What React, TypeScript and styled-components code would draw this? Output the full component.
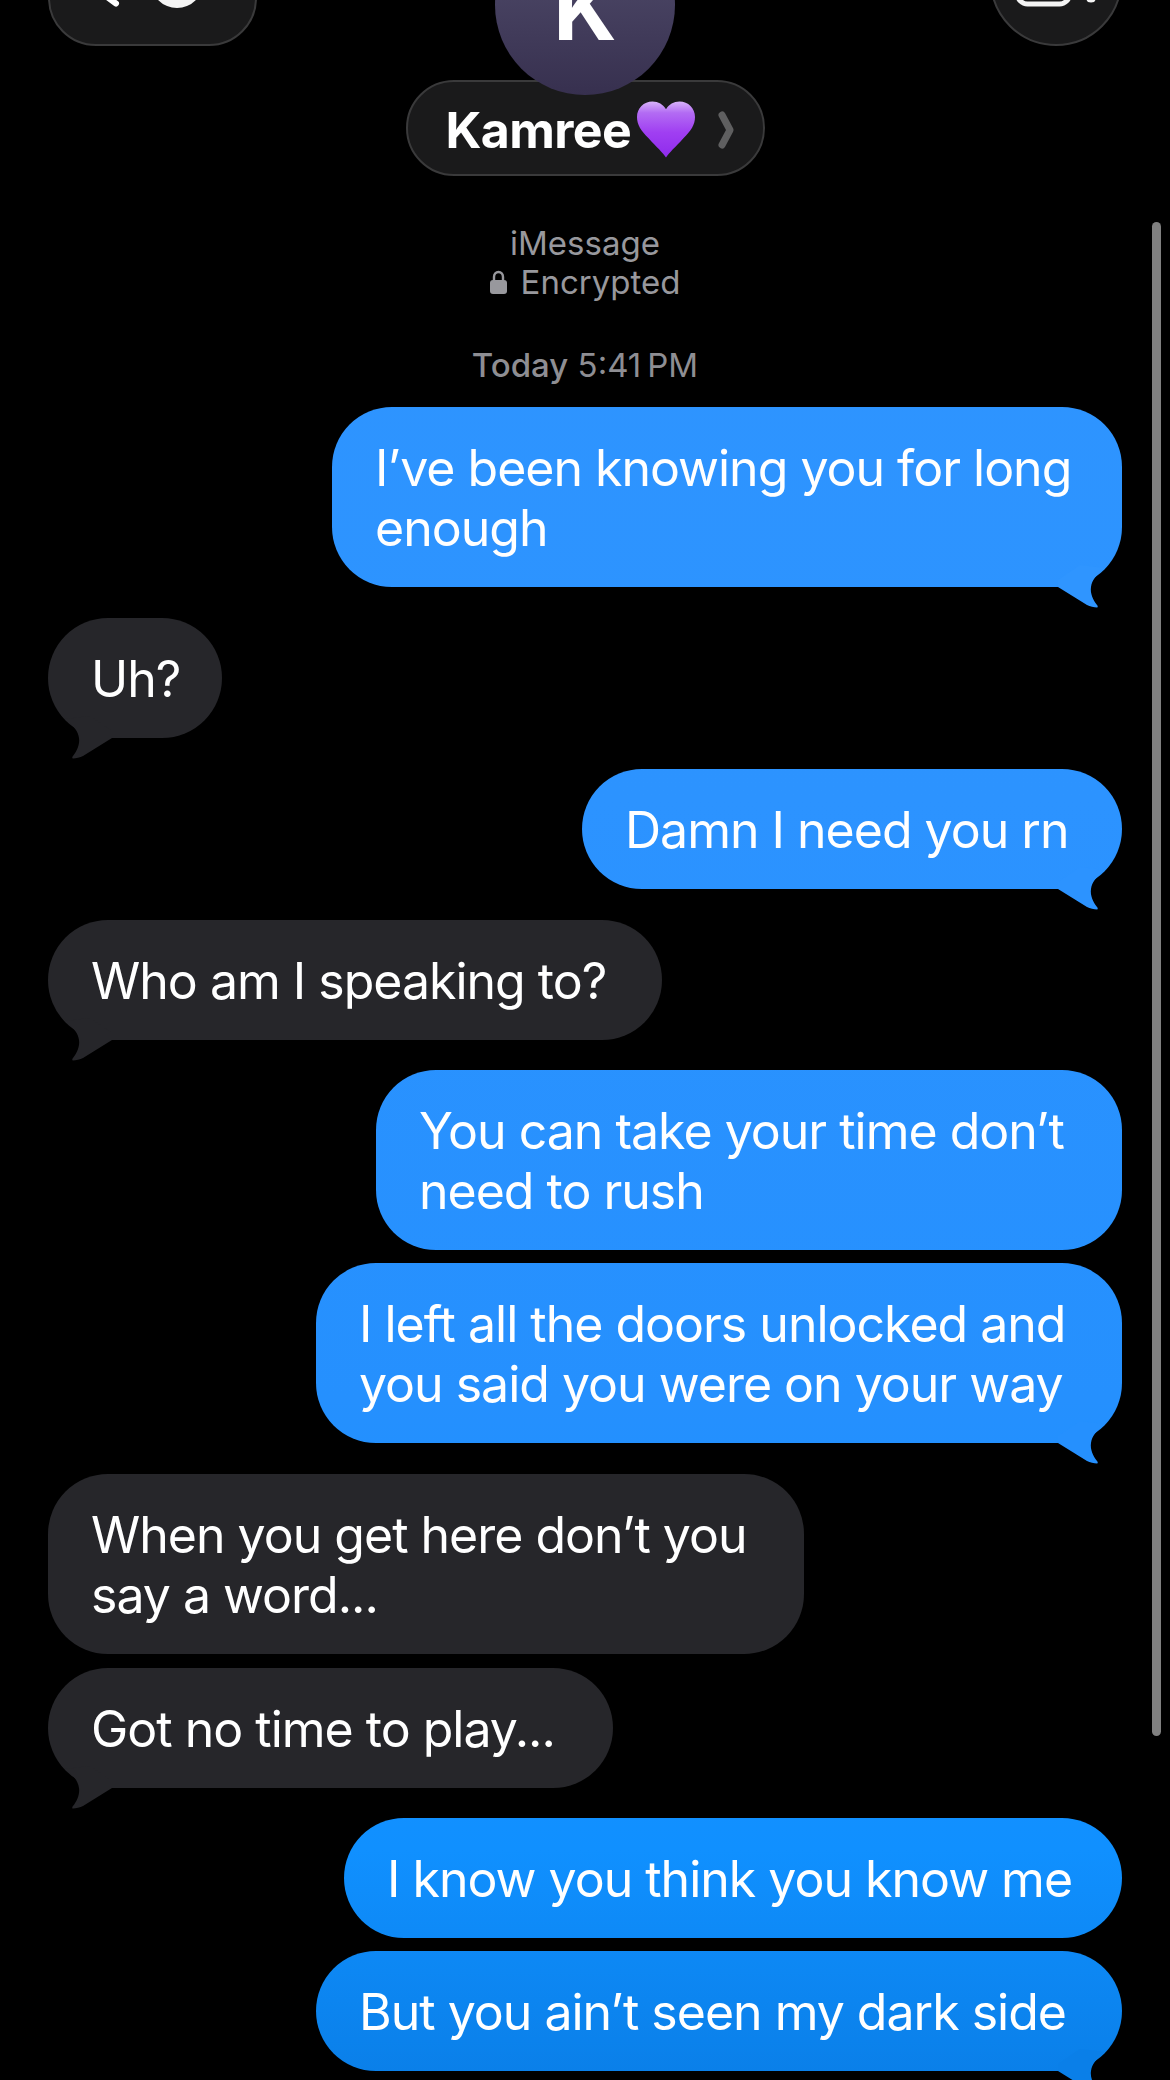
import styled, { createGlobalStyle } from 'styled-components';

type Message = {
  id: number;
  from: 'me' | 'them';
  lines: string[];
  width: number;
  tail?: boolean;
  tailColor?: string;
  gap: number;
};

const messages: Message[] = [
  { id: 1, from: 'me', lines: ['I’ve been knowing you for long', 'enough'], width: 790, tail: true, tailColor: '#2f95ff', gap: 0 },
  { id: 2, from: 'them', lines: ['Uh?'], width: 174, tail: true, tailColor: '#26262a', gap: 31 },
  { id: 3, from: 'me', lines: ['Damn I need you rn'], width: 540, tail: true, tailColor: '#2c93ff', gap: 31 },
  { id: 4, from: 'them', lines: ['Who am I speaking to?'], width: 614, tail: true, tailColor: '#26262a', gap: 31 },
  { id: 5, from: 'me', lines: ['You can take your time don’t', 'need to rush'], width: 746, gap: 30 },
  { id: 6, from: 'me', lines: ['I left all the doors unlocked and', 'you said you were on your way'], width: 806, tail: true, tailColor: '#2590fe', gap: 13 },
  { id: 7, from: 'them', lines: ['When you get here don’t you', 'say a word...'], width: 756, gap: 31 },
  { id: 8, from: 'them', lines: ['Got no time to play...'], width: 565, tail: true, tailColor: '#26262a', gap: 14 },
  { id: 9, from: 'me', lines: ['I know you think you know me'], width: 778, gap: 30 },
  { id: 10, from: 'me', lines: ['But you ain’t seen my dark side'], width: 806, tail: true, tailColor: '#0a7fe8', gap: 13 },
];

function BubbleTail({ side, color }: { side: 'me' | 'them'; color?: string }) {
  return (
    <TailSvg $side={side} viewBox="0 0 72 50" aria-hidden="true">
      <path
        fill={color}
        d="M8 27 L37 45 C40 46.5 44 47.5 47 47.5 C48 47.5 48 46 47 45 C43 40 40 33 41 27 C42 20 46 16 50 12 L55 8 L30 5 L8 20 Z"
      />
    </TailSvg>
  );
}

export default function App() {
  return (
    <>
      <GlobalStyle />
      <Screen>
        <Header>
          <BackButton>
            <svg width="100" height="10" viewBox="0 0 100 10" aria-hidden="true">
              <path d="M0 -4 L13 5.5" stroke="#fff" strokeWidth="6" strokeLinecap="round" fill="none" />
              <circle cx="74" cy="-16" r="26" fill="#f4f4f4" />
            </svg>
          </BackButton>
          <Contact>
            <Avatar>K</Avatar>
            <NamePill>
              <Name>Kamree</Name>
              <HeartIcon width="58" height="58" viewBox="0 0 60 59" aria-hidden="true">
                <defs>
                  <linearGradient id="heart" x1="0" y1="0" x2="0" y2="1">
                    <stop offset="0" stopColor="#d8b4fa" />
                    <stop offset="0.2" stopColor="#b36cf3" />
                    <stop offset="0.55" stopColor="#a03ff2" />
                    <stop offset="1" stopColor="#8f2bec" />
                  </linearGradient>
                </defs>
                <path
                  fill="url(#heart)"
                  d="M30 58 C27 53 20 47 12 38 C4 30 0 24 0 16 C0 7 7 0 16 0 C22 0 27 3 30 8 C33 3 38 0 44 0 C53 0 60 7 60 16 C60 24 56 30 48 38 C40 47 33 53 30 58 Z"
                />
              </HeartIcon>
              <ChevronIcon width="16" height="38" viewBox="0 0 16 38" aria-hidden="true">
                <path d="M4 4 L12 19 L4 34" stroke="#5f5f60" strokeWidth="7" strokeLinecap="round" strokeLinejoin="round" fill="none" />
              </ChevronIcon>
            </NamePill>
          </Contact>
          <VideoButton>
            <svg width="82" height="8" viewBox="0 0 82 8" aria-hidden="true">
              <rect x="2.5" y="-30" width="52" height="35" rx="10" stroke="#f4f4f4" strokeWidth="5" fill="none" />
              <ellipse cx="76" cy="0" rx="4.5" ry="3.5" fill="#f4f4f4" />
            </svg>
          </VideoButton>
        </Header>

        <ServiceInfo>
          <div>iMessage</div>
          <EncryptedRow>
            <svg width="17" height="25" viewBox="0 0 17 25" aria-hidden="true">
              <path d="M4 11 V7 C4 4 6 2 8.5 2 C11 2 13 4 13 7 V11" stroke="#98989d" strokeWidth="2.4" fill="none" />
              <rect x="0" y="10" width="17" height="14" rx="3" fill="#98989d" />
            </svg>
            Encrypted
          </EncryptedRow>
        </ServiceInfo>

        <Timestamp>
          <strong>Today</strong> 5:41{'\u2009'}PM
        </Timestamp>

        <Thread>
          {messages.map((m) => (
            <Row key={m.id} $from={m.from} $gap={m.gap}>
              <Bubble $from={m.from} $width={m.width}>
                {m.lines.map((line) => (
                  <div key={line}>{line}</div>
                ))}
                {m.tail && <BubbleTail side={m.from} color={m.tailColor} />}
              </Bubble>
            </Row>
          ))}
        </Thread>

        <ScrollBar />
      </Screen>
    </>
  );
}

const GlobalStyle = createGlobalStyle`
  html, body {
    margin: 0;
    padding: 0;
    background: #000;
    overflow: hidden;
  }
  body {
    font-family: Inter, "Liberation Sans", sans-serif;
  }
`;

const Screen = styled.div`
  position: relative;
  width: 1170px;
  height: 2080px;
  overflow: hidden;
  background: #000;
  color: #fff;
`;

const Header = styled.header`
  display: grid;
  grid-template-columns: 1fr 359px 1fr;
  align-items: start;
  padding: 0 48px;
  height: 176px;
`;

const BackButton = styled.div`
  display: flex;
  align-items: flex-end;
  justify-content: center;
  justify-self: start;
  box-sizing: border-box;
  width: 209px;
  height: 96px;
  margin-top: -50px;
  padding-bottom: 36px;
  background: #1a1a1b;
  border: 2px solid #3a3a3b;
  border-radius: 48px;
`;

const VideoButton = styled(BackButton)`
  justify-self: end;
  width: 132px;
  height: 132px;
  margin-top: -86px;
  padding-bottom: 37px;
  border-radius: 50%;
`;

const Contact = styled.div`
  display: flex;
  flex-direction: column;
  align-items: center;
`;

const Avatar = styled.div`
  position: relative;
  z-index: 1;
  width: 180px;
  height: 180px;
  margin-top: -85px;
  flex-shrink: 0;
  border-radius: 50%;
  background: linear-gradient(180deg, #54506f 0%, #37304f 100%);
  color: #fff;
  font-size: 88px;
  font-weight: 700;
  line-height: 186px;
  text-align: center;
`;

const NamePill = styled.div`
  display: flex;
  align-items: center;
  box-sizing: border-box;
  width: 359px;
  height: 96px;
  margin-top: -15px;
  padding: 4px 0 0 38px;
  background: #1a1a1b;
  border: 2px solid #3a3a3b;
  border-radius: 48px;
`;

const Name = styled.span`
  font-size: 50px;
  font-weight: 700;
  letter-spacing: -0.6px;
  line-height: 1;
`;

const HeartIcon = styled.svg`
  margin-left: 6px;
  flex-shrink: 0;
`;

const ChevronIcon = styled.svg`
  margin-left: 23px;
  flex-shrink: 0;
`;

const ServiceInfo = styled.div`
  margin-top: 48px;
  text-align: center;
  font-size: 33px;
  line-height: 39px;
  color: #98989d;
`;

const EncryptedRow = styled.div`
  display: flex;
  justify-content: center;
  align-items: center;
  gap: 14px;
`;

const Timestamp = styled.div`
  margin-top: 44px;
  text-align: center;
  font-size: 33px;
  line-height: 39px;
  color: #8e8e93;

  strong {
    font-weight: 500;
  }
`;

const Thread = styled.main`
  display: flex;
  flex-direction: column;
  margin-top: 22px;
  padding: 0 48px;
`;

const Row = styled.div<{ $from: 'me' | 'them'; $gap: number }>`
  display: flex;
  justify-content: ${(p) => (p.$from === 'me' ? 'flex-end' : 'flex-start')};
  margin-top: ${(p) => p.$gap}px;
`;

const Bubble = styled.div<{ $from: 'me' | 'them'; $width: number }>`
  position: relative;
  box-sizing: border-box;
  width: ${(p) => p.$width}px;
  padding: 31px 0 29px 43px;
  border-radius: 60px;
  font-size: 50px;
  line-height: 60px;
  letter-spacing: -1px;
  white-space: nowrap;
  color: #fff;
  background: ${(p) =>
    p.$from === 'me'
      ? 'linear-gradient(180deg, #2f95ff 0px, #2c93ff 800px, #2590fe 1400px, #1090ff 1850px, #0a7fe8 2080px) fixed'
      : '#26262a'};
`;

const TailSvg = styled.svg<{ $side: 'me' | 'them' }>`
  position: absolute;
  bottom: -23px;
  width: 72px;
  height: 50px;
  ${(p) => (p.$side === 'me' ? 'right: 0;' : 'left: 0; transform: scaleX(-1);')}
`;

const ScrollBar = styled.div`
  position: absolute;
  top: 222px;
  left: 1152px;
  width: 9px;
  height: 1514px;
  border-radius: 5px;
  background: #808080;
`;
